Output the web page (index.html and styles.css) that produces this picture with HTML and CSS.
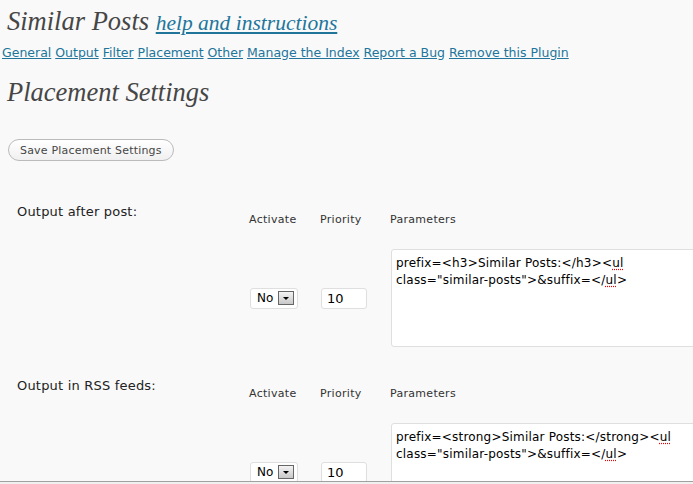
FILE: index.html
```html
<!DOCTYPE html>
<html lang="en">
<head>
    <meta charset="UTF-8">
    <title>Similar Posts - Placement Settings</title>
    <link rel="stylesheet" href="styles.css">
</head>
<body>
    <div class="wrap">
        <h2 class="title">Similar Posts <a href="#">help and instructions</a></h2>
        <div class="subnav">
            <a href="#">General</a>
            <a href="#">Output</a>
            <a href="#">Filter</a>
            <a href="#">Placement</a>
            <a href="#">Other</a>
            <a href="#">Manage the Index</a>
            <a href="#">Report a Bug</a>
            <a href="#">Remove this Plugin</a>
        </div>
        <h2 class="section-title">Placement Settings</h2>
        <form>
            <button type="button" class="button">Save Placement Settings</button>

            <div class="setting">
                <div class="setting-label">Output after post:</div>
                <div class="fields">
                    <div class="col-head">Activate</div>
                    <div class="col-head">Priority</div>
                    <div class="col-head">Parameters</div>
                    <div class="select"><span class="select-value">No</span><span class="select-arrow"></span></div>
                    <div class="text-input">10</div>
                    <div class="textarea">prefix=&lt;h3&gt;Similar Posts:&lt;/h3&gt;&lt;<span class="typo">ul</span><br>class="similar-posts"&gt;&amp;suffix=&lt;/<span class="typo">ul</span>&gt;</div>
                </div>
            </div>

            <div class="setting">
                <div class="setting-label">Output in RSS feeds:</div>
                <div class="fields">
                    <div class="col-head">Activate</div>
                    <div class="col-head">Priority</div>
                    <div class="col-head">Parameters</div>
                    <div class="select"><span class="select-value">No</span><span class="select-arrow"></span></div>
                    <div class="text-input">10</div>
                    <div class="textarea">prefix=&lt;strong&gt;Similar Posts:&lt;/strong&gt;&lt;<span class="typo">ul</span><br>class="similar-posts"&gt;&amp;suffix=&lt;/<span class="typo">ul</span>&gt;</div>
                </div>
            </div>
        </form>
    </div>
    <div class="statusbar"></div>
</body>
</html>
```

FILE: styles.css
```css
html { overflow: hidden; }
body { margin: 0; background: #f9f9f9; color: #333; font-family: "DejaVu Sans", Verdana, sans-serif; font-size: 13px; }
a { color: #21759b; }

.title { margin: 0; padding: 6px 0 0 7px; height: 30px; font-family: "Liberation Serif", Georgia, serif; font-style: italic; font-weight: normal; font-size: 26.5px; line-height: 30px; color: #464646; }
.title a { font-size: 21.5px; }

.subnav { padding: 8px 0 0 2px; font-size: 12.5px; line-height: 17px; }

.section-title { margin: 0; padding: 16px 0 0 7px; height: 30px; font-family: "Liberation Serif", Georgia, serif; font-style: italic; font-weight: normal; font-size: 26.5px; line-height: 30px; color: #464646; }

.button { display: block; margin: 32px 0 0 8px; height: 22px; padding: 0 11px; border: 1px solid #bbb; border-radius: 11px; background: linear-gradient(#fff, #f0f0f0); color: #464646; font-family: "DejaVu Sans", Verdana, sans-serif; font-size: 11px; letter-spacing: 0.2px; }

.setting { display: flex; padding-left: 17px; margin-top: 43px; height: 143px; }
.setting + .setting { margin-top: 31px; }
.setting-label { flex-shrink: 0; width: 232px; line-height: 16px; color: #222; letter-spacing: 0.2px; }
.fields { flex-shrink: 0; display: grid; grid-template-columns: 71px 70px 320px; grid-template-rows: 14px 98px; row-gap: 22px; align-items: center; padding-top: 9px; }
.col-head { font-size: 11px; line-height: 14px; color: #333; letter-spacing: 0.3px; }

.select { display: flex; align-items: center; box-sizing: border-box; width: 48px; height: 21px; margin-left: 1px; padding: 0 3px 0 6px; background: #fff; border: 1px solid #dfdfdf; border-radius: 3px; color: #000; }
.select-value { flex: 1; font-size: 12px; }
.select-arrow { position: relative; box-sizing: border-box; width: 16px; height: 14px; border: 1px solid #666; background: linear-gradient(#f4f4f4, #c8c8c8); }
.select-arrow::after { content: ""; position: absolute; left: 4px; top: 5px; border-left: 3px solid transparent; border-right: 3px solid transparent; border-top: 3px solid #000; }

.text-input { box-sizing: border-box; width: 46px; height: 21px; margin-left: 1px; padding: 0 5px; background: #fff; border: 1px solid #dfdfdf; border-radius: 3px; line-height: 19px; font-size: 13px; color: #000; }

.textarea { box-sizing: border-box; width: 320px; height: 98px; margin-left: 1px; padding: 5px 4px; background: #fff; border: 1px solid #dfdfdf; border-radius: 3px; line-height: 17px; font-size: 12px; letter-spacing: 0.2px; color: #000; }
.typo { text-decoration: underline dotted #e00; text-underline-offset: 2px; }

.statusbar { position: fixed; left: 0; right: 0; bottom: 0; height: 2px; border-top: 1px solid #a0a0a0; background: #f0f0f0; }
```
